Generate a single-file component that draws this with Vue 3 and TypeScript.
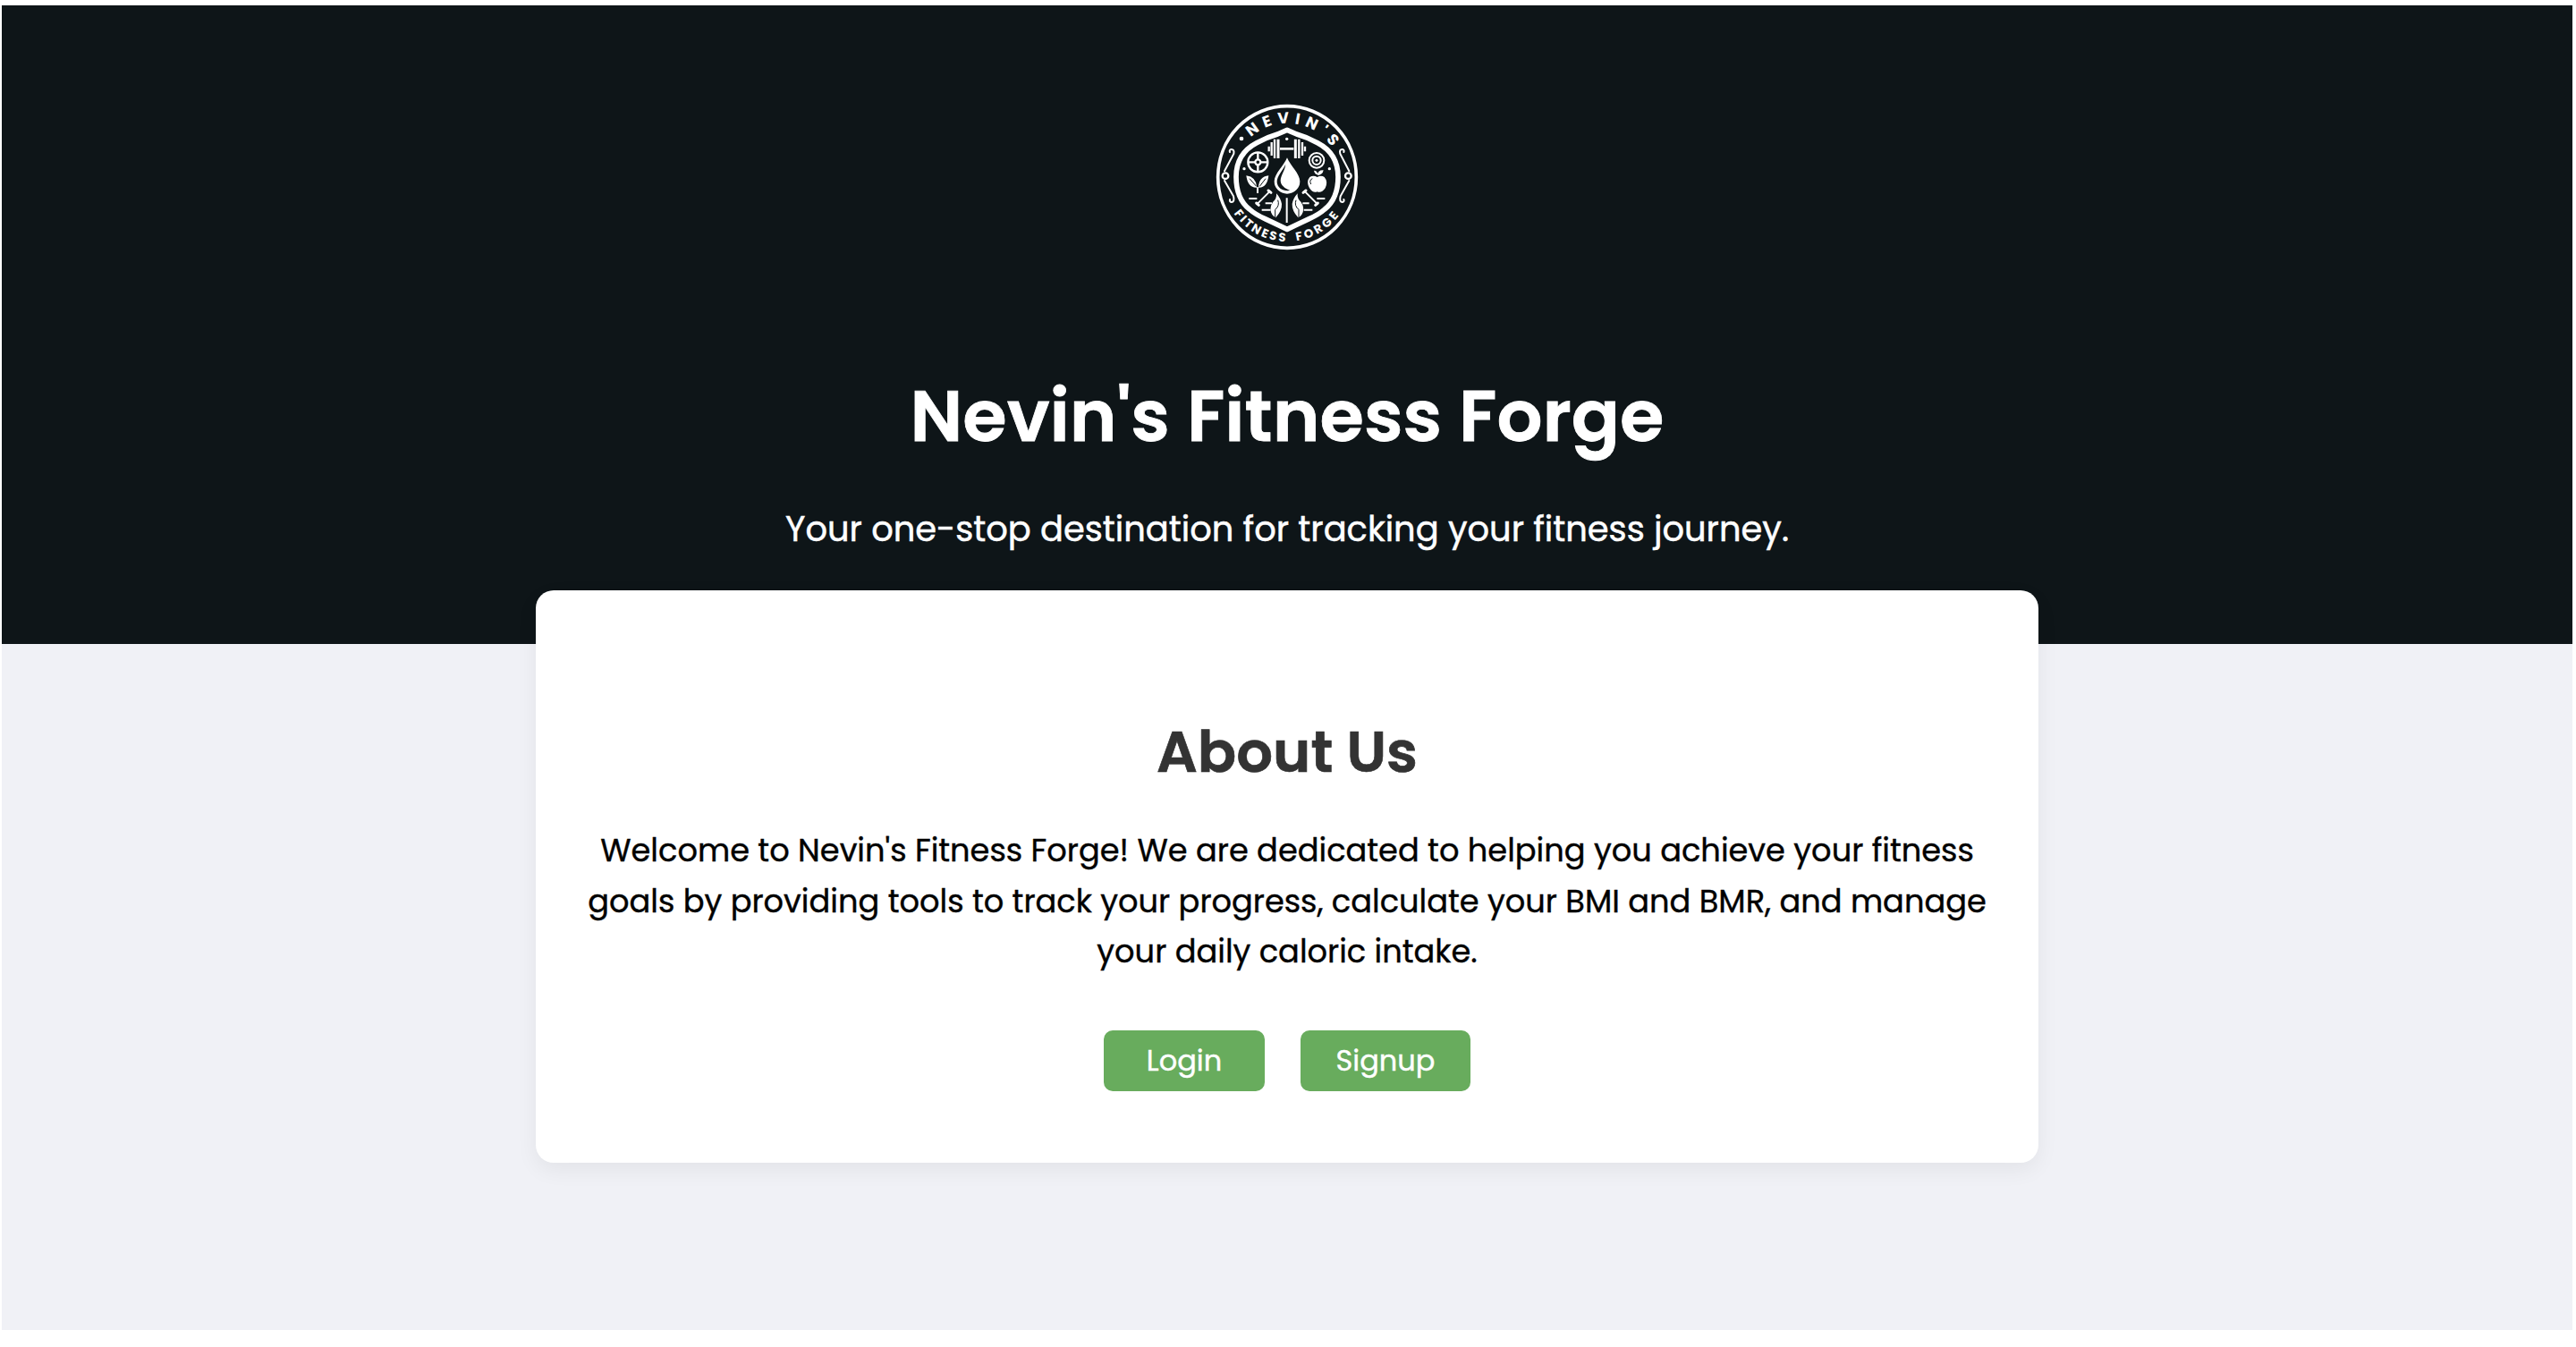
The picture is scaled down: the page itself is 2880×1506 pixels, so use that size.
<script setup lang="ts">
const aboutLines: string[] = [
  "Welcome to Nevin's Fitness Forge! We are dedicated to helping you achieve your fitness",
  'goals by providing tools to track your progress, calculate your BMI and BMR, and manage',
  'your daily caloric intake.',
]
const actions: { label: string; kind: string }[] = [
  { label: 'Login', kind: 'login' },
  { label: 'Signup', kind: 'signup' },
]
</script>

<template>
  <div class="frame">
    <div class="page">
      <header class="hero">
        <svg class="logo" viewBox="-2 0 600 600" fill="none" stroke="#fff">
          <defs>
            <path id="arc-top" d="M118 293A180 180 0 0 1 478 293" />
            <path id="arc-bottom" d="M81 293A217 217 0 0 0 515 293" />
          </defs>
          <ellipse cx="298" cy="294" rx="232" ry="238" stroke-width="11" />
          <path stroke-width="17" stroke-linejoin="round" d="M298 136L330 150Q365 160 400 179Q469 215 469 293Q469 366 424 402Q405 419 372 434L298 469L224 434Q191 419 172 402Q127 366 127 293Q127 215 196 179Q231 160 266 150Z" />
          <g class="ring-text" fill="#fff" stroke="none">
            <text class="top"><textPath href="#arc-top" startOffset="149" textLength="310">NEVIN'S</textPath></text>
            <text class="bottom"><textPath href="#arc-bottom" startOffset="130" textLength="205">FITNESS</textPath></text>
            <text class="bottom"><textPath href="#arc-bottom" startOffset="372" textLength="170">FORGE</textPath></text>
          </g>
          <g fill="#fff" stroke="none">
            <circle cx="145" cy="165" r="7" /><circle cx="154" cy="266" r="5" /><circle cx="440" cy="266" r="5" /><circle cx="297" cy="166" r="5" />
          </g>
          <g stroke-width="6" stroke-linecap="round">
            <circle cx="91" cy="290" r="10" stroke-width="7" />
            <path d="M88 274L119 216Q122 200 110 201Q103 203 106 210M88 306L118 358Q123 378 111 378Q104 376 106 369" />
            <circle cx="503" cy="290" r="10" stroke-width="7" />
            <path d="M506 274L476 216Q472 200 484 201Q491 203 488 210M506 306L477 358Q472 378 484 378Q491 376 488 369" />
          </g>
          <path stroke-width="8" d="M274 199H320" />
          <path stroke-width="9" d="M268 167V231M326 167V231" />
          <path stroke-width="7" d="M256 167V231M338 167V231M246 177V222M349 177V222M237 191V208M358 191V208" />
          <circle cx="200" cy="244" r="33" stroke-width="7" />
          <circle cx="200" cy="244" r="9" stroke-width="7" />
          <path stroke-width="7" d="M200 211V235M200 253V277M167 244H191M209 244H233" />
          <circle cx="397" cy="238" r="25" stroke-width="6" /><circle cx="397" cy="238" r="14" stroke-width="6" /><circle cx="397" cy="238" r="4" fill="#fff" />
          <path fill="#fff" stroke="none" d="M298 229C308 255 341 283 341 308A43 42 0 0 1 255 308C255 283 288 255 298 229Z" />
          <path fill="#0e1518" stroke="none" d="M293 251C284 272 263 290 264 311C266 331 284 342 308 339C290 332 277 322 276 306C276 288 291 272 293 251Z" />
          <g fill="#fff" stroke="none">
            <path d="M161 289Q194 293 197 329Q166 331 161 289ZM236 289Q203 293 202 329Q231 331 236 289Z" />
            <path d="M399 294Q412 286 423 294Q436 309 426 331Q413 349 399 343Q385 349 373 331Q361 309 374 294Q386 286 399 294Z" />
            <path d="M400 288Q400 270 420 271Q417 287 400 288ZM388 272Q400 272 401 286Q390 284 388 272Z" />
            <path d="M262 349Q264 366 250 378Q236 400 248 420Q254 428 260 430Q281 407 280 384Q276 364 262 349ZM333 349Q331 366 345 378Q359 400 347 420Q341 428 335 430Q314 407 315 384Q319 364 333 349Z" />
          </g>
          <path stroke="#0e1518" stroke-width="3" d="M172 299L195 325M226 299L206 325M378 318Q371 304 383 299M267 371Q274 390 258 403L258 429M328 371Q321 390 337 403L337 429" />
          <path stroke-width="6" d="M297 364V447M170 366H197M398 366H425M225 382H247M350 382H372M213 404H243M354 404H383M199 348V328" />
          <path stroke-width="6" d="M199 383L241 341M398 383L356 341" />
          <path stroke-width="9" stroke-linecap="round" d="M195 381L203 388M235 339L244 346M401 381L393 388M361 339L352 346" />
        </svg>
        <h1>Nevin's Fitness Forge</h1>
        <p class="tagline">Your one-stop destination for tracking your fitness journey.</p>
      </header>
      <main class="card">
        <h2>About Us</h2>
        <p class="about">
          <span v-for="(line, i) in aboutLines" :key="i" class="line">{{ line }}</span>
        </p>
        <div class="actions">
          <button v-for="a in actions" :key="a.kind" class="btn" :class="a.kind">{{ a.label }}</button>
        </div>
      </main>
    </div>
  </div>
</template>

<style>
body { background: #fff; }
</style>

<style scoped>
.frame {
  box-sizing: border-box;
  height: 1506px;
  padding: 6px 4px 19px 2px;
  background: #fff;
}
.page {
  height: 1481px;
  background: #f0f1f6;
  font-family: Poppins, Inter, sans-serif;
  text-align: center;
}
.hero {
  box-sizing: border-box;
  height: 714px;
  padding-top: 94px;
  background: #0e1518;
  color: #fff;
}
.logo { display: block; width: 200px; height: 200px; margin: 0 auto; }
.ring-text { font-weight: 700; }
.ring-text .top { font-size: 52px; }
.ring-text .bottom { font-size: 40px; }
h1 {
  margin: 105px 0 0;
  font-size: 80px;
  line-height: 120px;
  font-weight: 600;
  -webkit-text-stroke: 0.8px currentColor;
}
.tagline {
  margin: 37px 0 0;
  font-size: 38.4px;
  line-height: 60px;
  -webkit-text-stroke: 0.5px currentColor;
}
.card {
  box-sizing: border-box;
  position: relative;
  width: 1680px;
  height: 640px;
  margin: -60px auto 0;
  padding-top: 133px;
  border-radius: 20px;
  background: #fff;
  box-shadow: 0 8px 24px rgba(0, 0, 0, 0.06);
}
h2 {
  margin: 0;
  color: #333;
  font-size: 64px;
  line-height: 96px;
  font-weight: 600;
  -webkit-text-stroke: 0.7px currentColor;
}
.about {
  margin: 34px 0 0;
  color: #000;
  font-size: 35.2px;
  line-height: 56.5px;
  -webkit-text-stroke: 0.4px currentColor;
}
.line { display: block; white-space: nowrap; }
.actions { display: flex; justify-content: center; gap: 40px; margin-top: 59.5px; }
.btn {
  width: 180px;
  height: 68px;
  padding: 0;
  border: 0;
  border-radius: 10px;
  background: #68ac5d;
  color: #fff;
  font: inherit;
  font-size: 32px;
  -webkit-text-stroke: 0.4px currentColor;
}
.signup { width: 190px; }
</style>
